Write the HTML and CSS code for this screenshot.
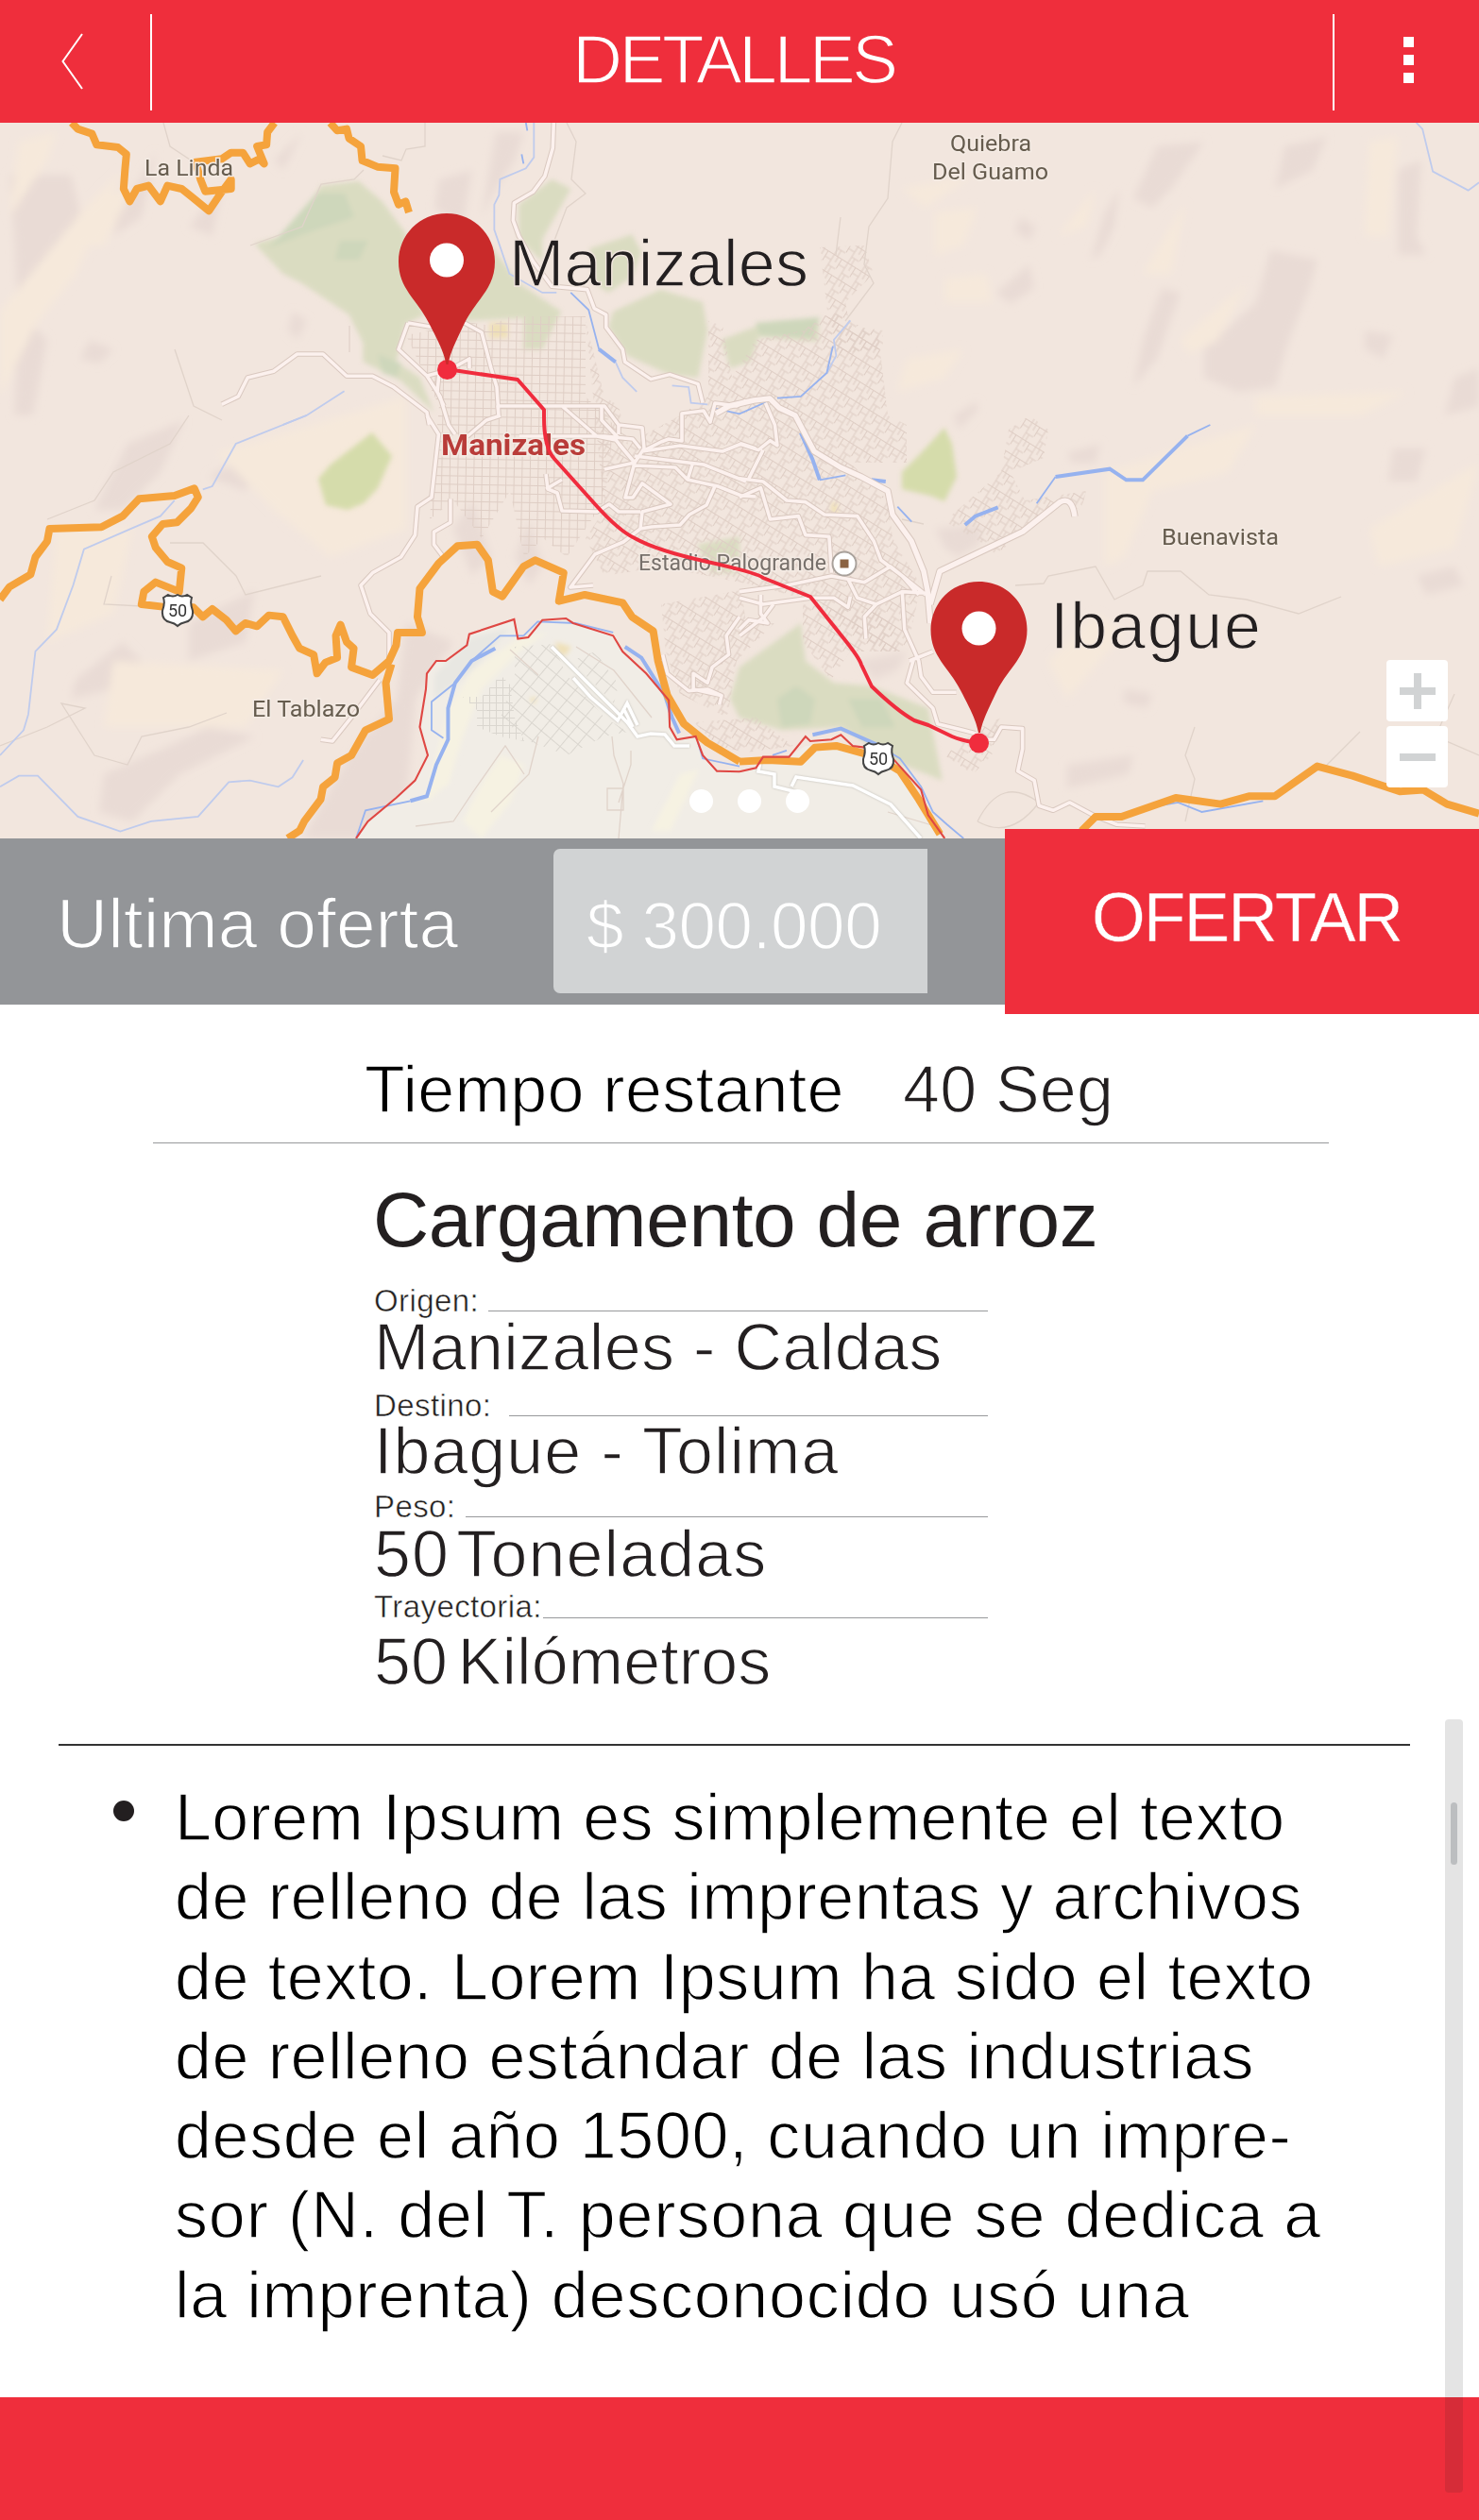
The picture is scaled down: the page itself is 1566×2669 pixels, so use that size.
FILE: index.html
```html
<!DOCTYPE html>
<html lang="es">
<head>
<meta charset="utf-8">
<title>Detalles</title>
<link rel="stylesheet" href="styles.css">
</head>
<body>
<div class="screen">
  <header class="topbar">
    <button class="back" aria-label="Volver">
      <svg width="24" height="62" viewBox="0 0 24 62"><path d="M22 2 L1.500 31 L22 60"/></svg>
    </button>
    <span class="divider"></span>
    <h1 class="topbar-title">DETALLES</h1>
    <span class="divider"></span>
    <button class="more" aria-label="Opciones"><i></i><i></i><i></i></button>
  </header>

  <section class="map">
    <svg class="map-canvas" viewBox="0 130 1566 758" width="1566" height="758">
      <defs>
        <pattern id="grid" width="8.500" height="9" patternUnits="userSpaceOnUse" patternTransform="rotate(1)">
          <path d="M0 .5H8.500M.5 0V9" class="street"/>
        </pattern>
        <pattern id="gridB" width="17" height="20" patternUnits="userSpaceOnUse" patternTransform="rotate(32)">
          <path d="M0 .5H17M.5 0V12M8 0V20M0 7H8M8 13H17M12 13V20M13 0V7" class="street"/>
        </pattern>
        <pattern id="gridC" width="13" height="14" patternUnits="userSpaceOnUse" patternTransform="rotate(40)">
          <path d="M0 .5H13M.5 0V14" class="street-low"/>
        </pattern>
        <pattern id="gridD" width="7" height="8" patternUnits="userSpaceOnUse">
          <path d="M0 .5H7M.5 0V8" class="street-low"/>
        </pattern>
        <filter id="soft" x="-20%" y="-20%" width="140%" height="140%"><feGaussianBlur stdDeviation="4.500"/></filter>
        <filter id="edge" x="-20%" y="-20%" width="140%" height="140%"><feGaussianBlur stdDeviation="2.500"/></filter>
        <g id="shield">
          <path d="M-15 -14 L-10 -17 Q-5 -14 0 -17 Q5 -14 10 -17 L15 -14 Q13 -8 16 0 Q17 10 8 12 Q3 13 0 16 Q-3 13 -8 12 Q-17 10 -16 0 Q-13 -8 -15 -14Z" class="shield"/>
          <text y="6" text-anchor="middle" class="shield-text">50</text>
        </g>
        <g id="streets">
          <g transform="scale(.4994 .3333)">
            <path d="M1174 390L1172 470 1155 560 1130 610 1090 645 1088 700 1100 750 1130 830 1170 910 1245 920 1260 980 1285 1000V1040L1320 1110 1325 1150 1380 1205 1420 1190 1480 1220 1490 1280M470 1285L505 1260 525 1200 580 1180 630 1125H685L735 1195H790L835 1230 905 1310 910 1350"/>
          </g>
          <path d="M432 342L422 370 452 398 466 420 475 450 482 460M432 342L455 346 490 341 510 352 520 390 526 410 528 440 527 430H640L655 450V460M452 398L475 392 497 380 497 390M495 462L515 445 530 440M465 395L463 415 470 430M595 430L632 462 652 466 672 490M637 430V445L655 464M655 450L680 453 682 475 672 490M550 462H640L670 465 678 475M672 490L655 470M672 490L640 497M672 490L662 527H670L680 512 710 534 680 542 678 560 660 574 630 587 604 622 628 620M680 478L700 468 708 465 722 467V438L745 435 752 447 757 427 780 430 790 424M680 478L720 472 765 478 785 470 800 475M672 483L745 492 790 510M672 493L715 495 728 508 760 515 785 525 800 526M733 492L728 508M578 502L580 518 590 522 595 541 632 542 645 534 655 542H678M678 560L690 558 720 556 730 545 748 535 757 515M578 518L595 508"/>
          <g transform="translate(0 440) scale(.4994 .3333)">
            <path d="M905 0L930 60 915 260 885 290 880 380 850 450 790 500 765 540 785 630 825 690V780M805 840L750 950 705 1035 680 1030M955 265V340L920 370V410L940 450M1568 640L1540 700 1545 760 1510 800 1500 850 1470 820V870L1530 890 1525 920M1405 760L1415 820 1460 875 1500 870 1530 890M1568 700L1620 640 1640 600"/>
          </g>
          <g transform="translate(783 440) scale(.4994 .3333)">
            <path d="M0 200L50 210 100 270 140 275 180 315 250 320 285 400 300 460 345 510 380 570M0 260L45 230 65 330 125 320 140 380 190 385 195 500M345 560L350 680 380 780 385 830 410 880 460 880M360 780L410 750M370 770L355 850 410 930 420 980 500 1010M0 560L100 540 195 510 265 530 320 480 395 570M0 580L50 600 150 580 200 580 230 610 235 575M230 520L250 580 290 600 345 560 395 565M290 600L265 640 268 710M500 1030L540 1030 555 990 600 995V1060L590 1130 625 1160 635 1240 665 1255 700 1230 750 1270 800 1300 860 1305M0 90L40 110 65 80 80 95 75 30 55 -40M50 110L20 200M0 680L20 650 60 660 45 630V570"/>
          </g>
        </g>
        <path id="avenue" d="M758 438L772 430 798 424 815 422 825 432 842 440 862 478 890 495 912 505 940 520 945 545 965 573 978 605 982 625 985 660M985 640L995 605 1083 563 1122 532Q1135 525 1138 547"/>
      </defs>
      <rect x="0" y="130" width="1566" height="758" fill="#f2e6de"/>

      <!-- relief -->
      <g filter="url(#soft)">
        <g class="shade">
          <path d="M10 185L75 185 90 245 60 255 45 330 20 350 15 250Z"/>
          <path d="M125 230L165 160 150 230 120 250Z"/>
          <path d="M200 240L235 200 225 250Z"/>
          <path d="M290 170L320 140 300 180Z"/>
          <path d="M525 140L555 140 545 170 525 200 510 230Z"/>
          <path d="M465 190L500 180 490 240 460 220Z"/>
          <path d="M20 330L50 360 35 440 15 440Z"/>
          <path d="M95 360L120 370 105 385 85 380Z"/>
          <path d="M310 330L325 340 315 360 305 350Z"/>
          <path d="M100 540L135 470 195 445 170 500 130 540Z"/>
          <path d="M220 505L290 470 260 520Z"/>
          <path d="M80 720L130 680 150 700 120 730 75 740Z"/>
          <path d="M200 660L270 625 260 680 200 700Z"/>
          <path d="M110 820L190 785 220 770 270 780 190 820 140 870 105 860Z"/>
          <path d="M430 660L480 680 440 740 430 850 380 888 320 888 370 800 420 740Z"/>
          <path d="M480 560L500 530 520 590 500 610ZM545 590L560 550 575 600 560 620Z"/>
          <path d="M1225 155L1275 150 1240 200 1220 220 1200 210Z"/>
          <path d="M1360 155L1405 145 1390 180 1350 200Z"/>
          <path d="M1480 180L1505 170 1500 250 1510 270 1480 270Z"/>
          <path d="M1345 265L1395 275 1385 310 1365 360 1350 410 1310 415 1275 400 1275 370 1330 320Z"/>
          <path d="M1230 305L1250 310 1225 380 1200 410 1210 360Z"/>
          <path d="M1170 225L1185 200 1180 240 1165 270 1155 275Z"/>
          <path d="M1080 230L1097 240 1090 255 1075 245Z"/>
          <path d="M1055 310L1090 280 1095 305 1070 322Z"/>
          <path d="M1445 350L1475 355 1465 380 1445 370Z"/>
          <path d="M1475 475L1510 475 1500 510 1470 510Z"/>
          <path d="M1500 610L1540 600 1550 620 1510 630Z"/>
          <path d="M990 560L1038 555 1038 575 1015 590 1000 580Z"/>
          <path d="M1010 440L1035 425 1035 435 1015 455Z"/>
          <path d="M1130 480L1165 470 1160 490 1135 490Z"/>
          <path d="M1130 810L1200 800 1195 820 1130 835Z"/>
          <path d="M910 700L960 690 950 710 925 720Z"/>
          <path d="M1190 730L1220 735 1215 750 1190 745Z"/>
          <path d="M1540 400L1566 390 1566 430 1530 440Z"/>
        </g>
        <g class="light">
          <path d="M0 330L90 220 130 180 80 290 40 340 0 420Z"/>
          <path d="M20 150L60 140 50 170 10 230Z"/>
          <path d="M100 210L140 200 110 260 90 260Z"/>
          <path d="M230 480L430 420 430 560 350 590 290 540Z"/>
          <path d="M60 560L140 560 120 650 50 680Z"/>
          <path d="M120 700L300 710 260 770 110 770Z"/>
          <path d="M990 225L1035 220 1020 260 990 270Z"/>
          <path d="M955 200L1030 185 980 220Z"/>
          <path d="M960 380L1020 370 1000 400 950 415Z"/>
          <path d="M1000 295L1045 290 1050 320 1000 320Z"/>
          <path d="M1120 250L1160 200 1150 240Z"/>
          <path d="M1210 290L1255 215 1240 290Z"/>
          <path d="M1250 360L1320 300 1290 360 1260 375Z"/>
          <path d="M1450 150L1480 145 1470 250 1445 250Z"/>
          <path d="M1170 500L1330 450 1300 500 1220 520 1190 590 1170 600Z"/>
          <path d="M1450 560L1566 490 1540 580 1460 600Z"/>
          <path d="M1110 700L1160 650 1190 670 1130 740Z"/>
          <path d="M1330 420L1490 415 1440 440 1330 440Z"/>
        </g>
      </g>

      <!-- parks -->
      <g filter="url(#edge)">
        <g transform="scale(.4994 .3333)" class="park">
          <path d="M680 590L760 575 810 640 860 740 870 900 900 1000 860 1030 840 1150 890 1200 920 1310 850 1210 770 1150 770 1090 740 1000 640 900 600 870 540 775 620 740Z"/>
          <path d="M1040 780L1100 900 1190 990 1150 1110 1110 1110 1110 1010 980 1020 1010 900Z"/>
          <path d="M1250 790L1340 745 1360 800 1340 880 1290 930 1260 900Z"/>
          <path d="M1300 990L1400 920 1490 960 1500 1050 1480 1200 1420 1190 1330 1130 1290 1040Z"/>
          <path d="M1100 650L1170 570 1210 600 1180 680 1150 760 1150 830 1100 760Z"/>
          <path d="M1598 1040L1640 1020 1735 1010 1735 1085 1610 1070 1590 1150 1548 1170 1530 1080Z"/>
        </g>
        <path class="park-bright" d="M394 458L415 483 400 517 385 533 368 540 345 535 337 507 350 492Z"/>
        <path class="park-bright" d="M1000 453L1008 470 1013 505 1000 531 985 525 955 518 955 500 975 480Z"/>
        <g transform="translate(783 440) scale(.4994 .3333)">
          <path class="park" d="M130 660L140 780 200 850 280 860 400 930 430 1160 330 1100 215 990 90 1000 0 960 -20 900 0 800Z"/>
          <path class="park" d="M-90 410L0 385 0 500 -60 500Z"/>
          <path class="park-deep" d="M80 900L120 860 160 900 150 980 90 990ZM230 900L300 900 330 990 260 990Z"/>
        </g>
        <path class="park-deep" d="M335 205L365 205 375 230 330 245 285 262ZM360 255L390 255 380 275 355 275ZM400 375L425 385 420 400 405 395ZM800 342L868 336 860 358 805 355Z"/>
        <path class="field" d="M518 342L538 342 538 358 518 358ZM880 532L887 532 887 545 880 545Z"/>
      </g>

      <!-- street grids -->
      <path fill="url(#grid)" d="M430 355L455 350 500 342 520 345 540 335 620 335 620 420 650 450 640 530 620 560 600 590 575 570 555 590 540 520 510 570 480 530 455 550 460 480 465 430Z"/>
      <path fill="url(#gridB)" d="M620 340L640 420 655 430 665 470 720 440 750 420 750 340 765 345 775 400 800 360 850 350 880 330 930 355 940 440 960 450 960 490 900 490 940 530 945 570 975 620 960 690 930 690 870 640 800 620 700 600 640 610 620 570 640 540Z"/>
      <path fill="url(#gridB)" d="M868 262L915 260 925 290 895 320 900 345 935 350 935 370 880 375 875 320Z"/>
      <path fill="url(#gridB)" d="M1000 552L1060 500 1068 455 1090 440 1110 455 1105 485 1070 500 1085 530 1150 520 1145 540 1120 532 1070 570 1058 590 1040 575Z"/>
      <path fill="url(#gridB)" d="M700 640L785 625 790 660 820 660 780 700 770 760 720 735 705 690ZM735 765L800 760 840 790 790 797 760 790ZM850 640L940 650 950 690 900 690 880 720 850 680Z"/>
      <path fill="url(#gridB)" d="M1000 800L1040 770 1060 760 1050 800 1030 820Z"/>

      <!-- lowland -->
      <g transform="translate(0 440) scale(.4994 .3333)">
        <path class="low" d="M755 1344L780 1290 840 1215 880 1160 907 1080 890 990 903 870 905 820 925 780 945 780 990 730 995 695 1090 648 1098 710 1120 705 1150 650 1200 645 1215 660 1300 700 1320 750 1370 820 1418 905 1420 990 1435 1030 1475 1020 1490 1080 1520 1130 1570 1135V1344Z"/>
      </g>
      <g transform="translate(783 440) scale(.4994 .3333)">
        <path class="low" d="M-2 1135L35 1120 50 1085 105 1085 140 1050 215 1045 290 1085 340 1130 380 1220 430 1344H-2Z"/>
      </g>
      <g filter="url(#edge)">
        <path class="meadow" d="M475 750L500 710 550 675 580 670 550 690 510 730 490 780 475 830 450 850ZM530 800L555 810 540 850 510 888 490 870 510 830ZM720 820L740 815 710 880 690 880Z"/>
        <path class="mist" d="M460 715L500 675 540 665 500 710 460 740Z"/>
        <path class="field" d="M588 680L605 685 598 695 590 690ZM560 740L568 738 566 746Z"/>
      </g>
      <path fill="url(#gridC)" d="M545 685L585 682 600 715 640 760 665 775 640 780 600 800 560 785 530 760 545 715Z"/>
      <path fill="url(#gridD)" d="M490 738L510 738 530 715 540 725 545 760 555 785 530 780 505 770 505 752Z"/>
      <path fill="url(#gridC)" d="M605 700L630 690 655 725 650 745Z"/>

      <!-- minor tracks -->
      <g class="track">
        <path d="M173 130L180 155 210 175M450 130L450 155 430 158 425 170 405 165M385 180L375 190 340 195 320 240 265 260M955 130L945 150 940 210 920 240 915 280 925 300 895 340M890 230L885 270M600 130L610 150 605 190 620 205 600 220 585 260"/>
        <path d="M200 440L180 470 120 500 100 530 50 550M180 575L215 575 250 610 260 630 340 610M118 610L110 640 150 642M0 790L50 770 90 750 65 745 100 800 135 810 150 780 200 770 240 755"/>
        <path d="M370 345V373M185 370L205 430 235 445M1075 620L1105 618 1110 610 1160 600 1180 635 1210 620 1215 605 1250 605 1280 630 1320 635 1375 650 1420 632"/>
        <path d="M1265 770L1255 800 1265 825 1255 870M1400 815L1440 775M1540 735L1520 780 1566 800M648 780L650 800 660 830 655 888M668 795L668 810 655 850M570 780L560 820 520 860M555 820L535 790 500 840 480 870 440 875M540 688L570 715M610 685L650 710 690 760M643 835H660V858H643Z"/>
        <path d="M1035 870Q1060 820 1100 850Q1070 890 1035 870M940 860L990 875M955 550L978 555"/>
      </g>

      <!-- rivers -->
      <g transform="scale(.4994 .3333)" class="river">
        <path d="M1132 390V500L1115 535 1060 570 1058 620 1048 650V730L1080 870 1150 930H1180M730 1243L650 1320 600 1350M1305 1150L1320 1200 1350 1245M1425 1225L1460 1230 1465 1280 1500 1285"/>
        <path class="deep" d="M1115 390L1118 415M1106 490L1110 520M1210 930L1248 985 1270 1110 1305 1150"/>
        <path class="deep wide" d="M1270 1110L1305 1150"/>
      </g>
      <g transform="translate(783 0) scale(.4994 .3333)" class="river">
        <path d="M1435 390L1448 410 1470 545 1545 605 1568 580M235 1018L200 1080 205 1130 185 1185"/>
        <path class="deep" d="M198 1100L185 1185 130 1260 80 1265M-60 1295L0 1315 60 1275"/>
      </g>
      <g transform="translate(0 440) scale(.4994 .3333)" class="river">
        <path d="M650 0L500 90 450 225 430 235M370 270L340 320 285 355 178 425 155 540 120 680 75 750 60 950 50 1000 0 1080M0 1180L40 1145H80L165 1275 255 1322 320 1290 420 1275 485 1165 530 1160 590 1180 620 1150 643 1095"/>
        <path class="deep" d="M965 850L915 910V1000L940 1025M755 1344L775 1255 870 1225M1110 700L1140 655 1220 660 1300 690M1480 1040L1490 1090 1568 1115M1000 780L1060 700 1110 700"/>
        <path class="deep wide" d="M870 1225L905 1210 925 1110 950 1030V930L965 850 1000 780 1050 740M1325 735L1360 770 1410 890 1425 960 1440 1010"/>
      </g>
      <g transform="translate(783 440) scale(.4994 .3333)" class="river">
        <path class="deep wide" d="M130 55L155 140 170 205M280 205L310 210M670 195L785 170 820 205H855L950 65M478 348L500 320 548 292M155 1015L215 995 290 1045"/>
        <path class="deep" d="M170 205L225 190M630 280L670 195M950 65L998 30M335 290L365 338M290 1045L340 1090 385 1180 410 1260 440 1300 475 1344M70 1080L100 1065M890 1240L930 1230 980 1260 1110 1225"/>
      </g>

      <!-- main streets: casing below, surface above -->
      <g class="road-casing"><use href="#streets"/><use href="#avenue" class="avenue-casing"/></g>
      <g class="road"><use href="#streets"/><use href="#avenue" class="avenue"/></g>
      <g class="runway">
        <path d="M584 685L664 765 675 780 689 777 704 778 714 790 730 790M607 718L625 738 654 763 664 745 675 768M660 750L670 770"/>
        <path d="M805 807L803 817 820 820 820 833 848 840M838 833L843 823 903 832 943 852 975 888"/>
      </g>

      <!-- highways -->
      <g class="highway">
        <g transform="scale(.4994 .3333)">
          <path d="M152 390L165 410 195 425 205 460 250 468 268 490 265 540 262 600 275 640 290 600 315 590 340 640 355 590 385 600 410 630 443 670 470 610 490 570V600L435 608 425 570 415 515 470 505 490 485H515L530 520 550 505 560 520 545 465 565 460 567 420 582 390M700 390L715 415 735 410 740 440 765 465 768 510 800 530 838 535 835 610 845 650 860 640 867 675"/>
        </g>
        <g transform="translate(0 440) scale(.4994 .3333)">
          <path d="M0 585L20 545 65 505 75 450 100 400 105 360 215 355 260 320 295 265 370 255 412 232 420 260 405 295 375 340 345 345 322 385 330 420 355 465 385 485 380 560 330 530 305 560 300 600 345 608 410 610 430 640 450 615 480 650 500 685 520 660 545 670 570 635 600 640 620 700 635 740 665 760 672 820 690 785 715 770 712 700 722 665 735 720 750 740 745 800 790 825 825 780 840 730 843 690H895L885 640 890 550 930 470 970 415 1012 410 1035 460 1045 560 1065 575 1110 480 1135 460 1195 500 1185 590 1240 570 1320 595 1340 640 1385 685 1395 780 1415 890 1450 980 1500 1040 1568 1100"/>
          <path d="M830 790L818 850 825 965 775 1000 745 1080 715 1105 710 1150 685 1180 680 1220 645 1290 635 1320 610 1344"/>
        </g>
        <g transform="translate(783 440) scale(.4994 .3333)">
          <path d="M0 1100L60 1095 130 1100 160 1055 205 1050 290 1085 340 1130 380 1220 425 1330M725 1320L755 1275H810L925 1215 1020 1235 1080 1210H1135L1225 1115 1300 1145 1400 1195 1450 1190 1500 1235 1568 1265"/>
        </g>
      </g>
      <g class="border">
        <path transform="translate(0 440) scale(.4994 .3333)" d="M755 1344L780 1290 840 1215 880 1160 907 1080 890 990 903 870 905 820 925 780H945L990 730 995 695 1090 648 1098 710 1120 705 1150 650 1200 645 1215 660 1300 700 1320 750 1370 820 1418 905 1420 990 1435 1030 1475 1020 1490 1080 1520 1130 1568 1132"/>
        <path transform="translate(783 440) scale(.4994 .3333)" d="M0 1132L35 1120 50 1085H105L140 1020 150 1035 195 1030 215 1015 240 1050 265 1055 325 1090 385 1190 400 1270 435 1344"/>
      </g>

      <!-- place names -->
      <g class="place">
        <text x="153" y="186" textLength="94" lengthAdjust="spacingAndGlyphs">La Linda</text>
        <text x="1006" y="160" textLength="86" lengthAdjust="spacingAndGlyphs">Quiebra</text>
        <text x="987" y="190" textLength="123" lengthAdjust="spacingAndGlyphs">Del Guamo</text>
        <text x="267" y="759" textLength="114" lengthAdjust="spacingAndGlyphs">El Tablazo</text>
        <text x="1230" y="577" textLength="124" lengthAdjust="spacingAndGlyphs">Buenavista</text>
        <text x="676" y="604" textLength="199" lengthAdjust="spacingAndGlyphs" class="poi">Estadio Palogrande</text>
        <text x="467" y="482" textLength="153" lengthAdjust="spacingAndGlyphs" class="city">Manizales</text>
      </g>
      <circle cx="894" cy="597" r="12.500" fill="#fff" stroke="#a9a19b" stroke-width="2"/>
      <rect x="889.500" y="592.500" width="9" height="9" fill="#8a6242"/>
      <use href="#shield" x="188" y="647"/>
      <use href="#shield" x="930" y="804"/>

      <!-- route and pins -->
      <path class="route" d="M473 391L548 402 576 434V442Q576 474 587 486L630 534Q655 562 672 570Q695 583 749 595T808 612L858 632 894 677Q910 697 912 704L923 727Q950 753 968 763L983 768 1008 780Q1020 785 1036 787"/>
      <circle cx="473.500" cy="391.500" r="10.500" class="stop"/>
      <circle cx="1036.500" cy="787" r="10.500" class="stop"/>
      <path id="pin" class="pin" d="M473 226C502 226 524 249 524 277C524 306 505 316 492 342C482 363 477 373 474.500 386H472.500C470 373 465 363 454 342C441 316 422 306 422 277C422 249 444 226 473 226Z"/>
      <circle cx="473" cy="275.500" r="18" fill="#fff"/>
      <use href="#pin" x="563.500" y="390"/>
      <circle cx="1036.500" cy="665.500" r="18" fill="#fff"/>
      <text x="539" y="303" textLength="317" class="stop-name">Manizales</text>
      <text x="1112" y="687" textLength="223" class="stop-name">Ibague</text>
    </svg>
    <div class="zoom">
      <button aria-label="Acercar"><svg width="38" height="38"><path d="M19 0V38M0 19H38"/></svg></button>
      <button aria-label="Alejar"><svg width="38" height="38"><path d="M0 19H38"/></svg></button>
    </div>
    <div class="pager"><i></i><i></i><i></i></div>
  </section>

  <section class="offer">
    <span class="offer-label">Ultima oferta</span>
    <span class="offer-value">$ 300.000</span>
    <button class="offer-button">OFERTAR</button>
  </section>

  <section class="timer">
    <span class="timer-label">Tiempo restante</span>
    <span class="timer-value">40 Seg</span>
  </section>

  <section class="cargo">
    <h2>Cargamento de arroz</h2>
    <dl>
      <div class="row origin"><dt>Origen:</dt><dd>Manizales - Caldas</dd></div>
      <div class="row destination"><dt>Destino:</dt><dd>Ibague - Tolima</dd></div>
      <div class="row weight"><dt>Peso:</dt><dd>50 Toneladas</dd></div>
      <div class="row distance"><dt>Trayectoria:</dt><dd>50 Kilómetros</dd></div>
    </dl>
  </section>

  <section class="notes">
    <span class="bullet"></span>
    <p>
      <span>Lorem Ipsum es simplemente el texto</span>
      <span>de relleno de las imprentas y archivos</span>
      <span>de texto. Lorem Ipsum ha sido el texto</span>
      <span>de relleno estándar de las industrias</span>
      <span>desde el año 1500, cuando un impre-</span>
      <span>sor (N. del T. persona que se dedica a</span>
      <span>la imprenta) desconocido usó una</span>
    </p>
  </section>

  <footer class="bottombar"></footer>
  <div class="scrollbar"><i></i></div>
</div>
</body>
</html>
```
FILE: styles.css
```css
* { box-sizing: border-box; margin: 0; padding: 0; }
body { background: #fff; }
button { border: 0; background: none; font: inherit; color: inherit; }

.screen {
  --red: #ef2e3c;
  --ink: #231f20;
  --thin: 1.3px;
  position: relative;
  display: flex;
  flex-direction: column;
  width: 1566px;
  height: 2669px;
  overflow: hidden;
  font-family: "Liberation Sans", Arial, sans-serif;
  font-size: 70px;
  color: var(--ink);
  white-space: nowrap;
}

/* a stroke in the background colour thins the glyphs to a light weight */
.topbar-title, .offer-label { -webkit-text-stroke: 1.5px var(--surface); }
.topbar { --surface: #ef2e3c; }
.offer { --surface: #939598; }

.topbar {
  flex: none;
  display: flex;
  align-items: center;
  height: 130px;
  background: var(--red);
  color: #fff;
}
.back { width: 159px; height: 130px; padding: 0 0 0 65px; text-align: left; display: flex; align-items: center; }
.back path { fill: none; stroke: #fff; stroke-width: 2; }
.divider { width: 2px; height: 102px; margin-top: 2px; background: #fff; }
.topbar-title { flex: 1; padding-right: 18px; text-align: center; font-size: 73px; font-weight: 400; letter-spacing: -3.3px; line-height: 125px; height: 130px; }
.more { width: 153px; height: 130px; display: flex; flex-direction: column; align-items: flex-start; justify-content: center; gap: 8px; padding: 0 0 4px 73px; }
.more i { width: 11px; height: 11px; background: #fff; }

.map { flex: none; position: relative; height: 758px; }
.map-canvas { display: block; }
.map path { vector-effect: non-scaling-stroke; }
.street { stroke: #decdc4; stroke-width: 1; fill: none; }
.street-low { stroke: #dad6cf; stroke-width: 1; fill: none; }
.shade { fill: #e9dbd5; }
.light { fill: #f6e9db; }
.park { fill: #dadcc1; }
.park-bright { fill: #d5dcab; }
.park-deep { fill: #ced7bb; }
.field { fill: #efe0b8; }
.low { fill: #f1ede6; }
.meadow { fill: #f6f2e2; }
.mist { fill: #e8e7e2; }
.track { fill: none; stroke: #e0d3ca; stroke-width: 1.3; }
.river { fill: none; stroke: #bfcbed; stroke-width: 1.8; }
.river .deep { stroke: #96b2ef; }
.river .wide { stroke-width: 4; }
.road-casing { fill: none; stroke: #d9c8bf; stroke-width: 5.6; stroke-linejoin: round; }
.road { fill: none; stroke: #fcf1ee; stroke-width: 3.6; stroke-linejoin: round; }
.avenue-casing { stroke-width: 7.5; }
.avenue { stroke-width: 5.5; }
.runway { fill: none; stroke: #fff; stroke-width: 3.6; filter: drop-shadow(0 0 1px #bdbab4); }
.highway { fill: none; stroke: #f5a33c; stroke-width: 8; stroke-linejoin: round; }
.border { fill: none; stroke: #df4743; stroke-width: 2.1; }
.place { font-family: Roboto, sans-serif; font-size: 24px; fill: #665c4e; stroke: #f4ebe4; stroke-width: 3px; paint-order: stroke; }
.place .poi { font-size: 23px; fill: #77706b; }
.place .city { font-size: 31px; font-weight: 700; fill: #b93c39; }
.shield { fill: #fff; stroke: #444; stroke-width: 2; }
.shield-text { font-family: Roboto, sans-serif; font-size: 18px; fill: #333; }
.route { fill: none; stroke: #f02c3d; stroke-width: 4; stroke-linejoin: round; }
.stop { fill: #f02c3d; }
.pin { fill: #c92a2a; }
.stop-name { font-size: 70px; fill: var(--ink); stroke: #f1e6de; stroke-width: 1.3px; }

.zoom { position: absolute; left: 1468px; top: 569px; display: grid; gap: 5px; }
.zoom button { display: grid; place-items: center; width: 65px; height: 65px; border-radius: 4px; background: #fff; }
.zoom path { stroke: #d1d3d4; stroke-width: 8; }
.pager { position: absolute; left: 730px; top: 706px; display: flex; gap: 26px; }
.pager i { width: 25px; height: 25px; border-radius: 50%; background: #fff; }

.offer { flex: none; display: flex; align-items: center; height: 176px; background: #939598; color: #fff; }
.offer-label { width: 586px; padding: 4px 0 0 60px; font-size: 75px; }
.offer-value {
  width: 396px; height: 153px; margin-bottom: 1px; padding-left: 35px;
  border-radius: 7px 0 0 7px;
  background: #d1d3d4;
  font-size: 71px; line-height: 164px; letter-spacing: -.4px;
  -webkit-text-stroke: 1.5px #d1d3d4;
}
.offer-button {
  position: relative;
  width: 502px; height: 196px; margin-left: 82px; padding: 0 0 9px 10px;
  background: var(--red);
  font-size: 73.5px; letter-spacing: -2.3px;
  -webkit-text-stroke: .5px var(--red);
}

.timer {
  flex: none; display: flex;
  width: 1245px; height: 147px; margin-left: 162px; padding-left: 224px;
  border-bottom: 1px solid #97999b;
  line-height: 180px;
  -webkit-text-stroke: var(--thin) #fff;
}
.timer-label { width: 570px; letter-spacing: .3px; color: #000; }
.timer-value { letter-spacing: .2px; }

.cargo { flex: none; width: 1431px; height: 638px; margin-left: 62px; padding-left: 333px; border-bottom: 2px solid #333; }
.cargo h2 { height: 145px; padding-top: 35px; font-size: 82px; font-weight: 400; line-height: 92px; letter-spacing: -.4px; }
.row dt { display: flex; width: 651px; height: 40px; padding-left: 1px; font-size: 33px; line-height: 44px; letter-spacing: .4px; -webkit-text-stroke: .5px #fff; }
.row dt::after { content: ""; flex: 1; height: 1px; margin: 32px 0 0 10px; background: #97999b; }
.row dd { height: 71px; line-height: 60px; -webkit-text-stroke: var(--thin) #fff; }
.origin dd { padding: 1px 0 0 1px; letter-spacing: .35px; }
.destination dt::after { margin-left: 19px; }
.destination dd { height: 67px; padding-left: 1px; letter-spacing: 1px; }
.weight dt::after { margin-left: 11px; }
.weight dd { height: 66px; padding: 2px 0 0 1px; letter-spacing: 1.1px; word-spacing: -12px; }
.distance dt::after { margin: 33px 0 0 1px; }
.distance dd { padding: 10px 0 0 1px; letter-spacing: .1px; word-spacing: -9px; }

.notes { flex: none; display: flex; height: 690px; padding: 34px 0 0 120px; }
.bullet { flex: none; width: 22px; height: 22px; margin: 24px 43px 0 0; border-radius: 50%; background: var(--ink); }
.notes p { color: #000; line-height: 84.25px; -webkit-text-stroke: var(--thin) #fff; }
.notes p span { display: block; letter-spacing: .5px; }
.notes p span:nth-child(1) { letter-spacing: .35px; }
.notes p span:nth-child(5) { letter-spacing: .65px; }
.notes p span:nth-child(6) { letter-spacing: .85px; }
.notes p span:nth-child(7) { letter-spacing: .75px; }

.bottombar { flex: 1; background: var(--red); }
.scrollbar { position: absolute; left: 1530px; top: 1821px; width: 19px; height: 819px; border-radius: 4px; background: rgba(35, 31, 32, .12); }
.scrollbar i { display: block; width: 7px; height: 66px; margin: 88px 0 0 6px; border-radius: 4px; background: #bcbec0; }
```
